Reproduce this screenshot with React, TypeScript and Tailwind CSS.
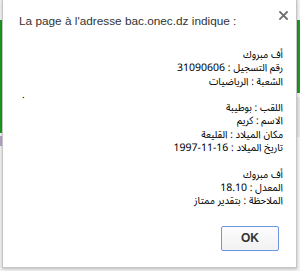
import React from "react";

const arabic = {
  fontFamily:
    '"Noto Sans Arabic ExtraCondensed", "Noto Sans Arabic Condensed", "Noto Sans Arabic UI", "Noto Sans Arabic", "DejaVu Sans", sans-serif',
};

type Line = [string, string?, boolean?];

function Row({ line }: { line: Line }) {
  const [label, value, numeric] = line;
  return (
    <div dir="rtl" className="whitespace-nowrap h-[13.3px]">
      {value === undefined ? (
        label
      ) : (
        <>
          {label} :{" "}
          {numeric ? (
            <span className="font-stretch-normal" style={{ fontFamily: '"Noto Sans Arabic UI", "DejaVu Sans", sans-serif' }}>
              {value}
            </span>
          ) : (
            value
          )}
        </>
      )}
    </div>
  );
}

export default function App() {
  const lines1: Line[] = [["أف مبروك"], ["رقم التسجيل", "31090606", true], ["الشعبة", "الرياضيات"]];
  const lines2: Line[] = [
    ["اللقب", "بوطيبة"],
    ["الاسم", "كريم"],
    ["مكان الميلاد", "القليعة"],
    ["تاريخ الميلاد", "16-11-1997", true],
  ];
  const lines3: Line[] = [["أف مبروك"], ["المعدل", "18.10", true], ["الملاحظة", "بتقدير ممتاز"]];
  return (
    <div className="relative w-[300px] h-[271px] overflow-hidden bg-[#f4f4f4]">
      {/* page behind the dialog */}
      <div className="absolute left-0 top-[20px] w-[3px] h-[113px] bg-[#1f9a1f]" />
      <div className="absolute left-0 top-[136px] w-[3px] h-[10px] bg-[#b9a6c9]" />
      <div className="absolute right-0 top-[20px] w-[4px] h-[73px] bg-[#1f9a1f]" />
      <div className="absolute right-0 top-[97px] w-[4px] h-[40px] bg-[#e4e4ea]" />

      {/* dialog */}
      <div
        className="absolute left-[2px] top-[-1px] w-[295px] h-[269px] bg-white border border-[#c6c6c6] shadow-[0_1px_3px_rgba(0,0,0,0.25)] flex flex-col pl-[16px] pr-[13px]"
        style={{ fontFamily: '"Liberation Sans", Arial, sans-serif' }}
      >
        <button className="absolute right-[7px] top-[9px] w-[12px] h-[12px] flex items-center justify-center">
          <svg width="9" height="9" viewBox="0 0 9 9">
            <path d="M1 1 L8 8 M8 1 L1 8" stroke="#6f6f6f" strokeWidth="1.8" strokeLinecap="square" />
          </svg>
        </button>

        <div className="pt-[13px] text-[11.8px] leading-[16px] text-[#333] whitespace-nowrap">
          La page à l'adresse bac.onec.dz indique :
        </div>

        <div
          className="mt-[19px] flex flex-col items-end text-[10.5px] leading-[13.3px] text-black font-stretch-extra-condensed"
          style={arabic}
        >
          {lines1.map((l, i) => (
            <Row key={"a" + i} line={l} />
          ))}
          <div className="self-stretch text-left h-[13.3px] pl-[3px]">.</div>
          {lines2.map((l, i) => (
            <Row key={"b" + i} line={l} />
          ))}
          <div className="h-[13.3px]" />
          {lines3.map((l, i) => (
            <Row key={"c" + i} line={l} />
          ))}
        </div>

        <div className="mt-[18px] flex justify-end pr-[4px]">
          <button className="w-[58px] h-[25px] rounded-[2px] border border-[#6d97e3] bg-gradient-to-b from-[#fdfdfd] to-[#f1f1f1] text-[12px] font-bold text-[#333] flex items-center justify-center">
            OK
          </button>
        </div>
      </div>
    </div>
  );
}
